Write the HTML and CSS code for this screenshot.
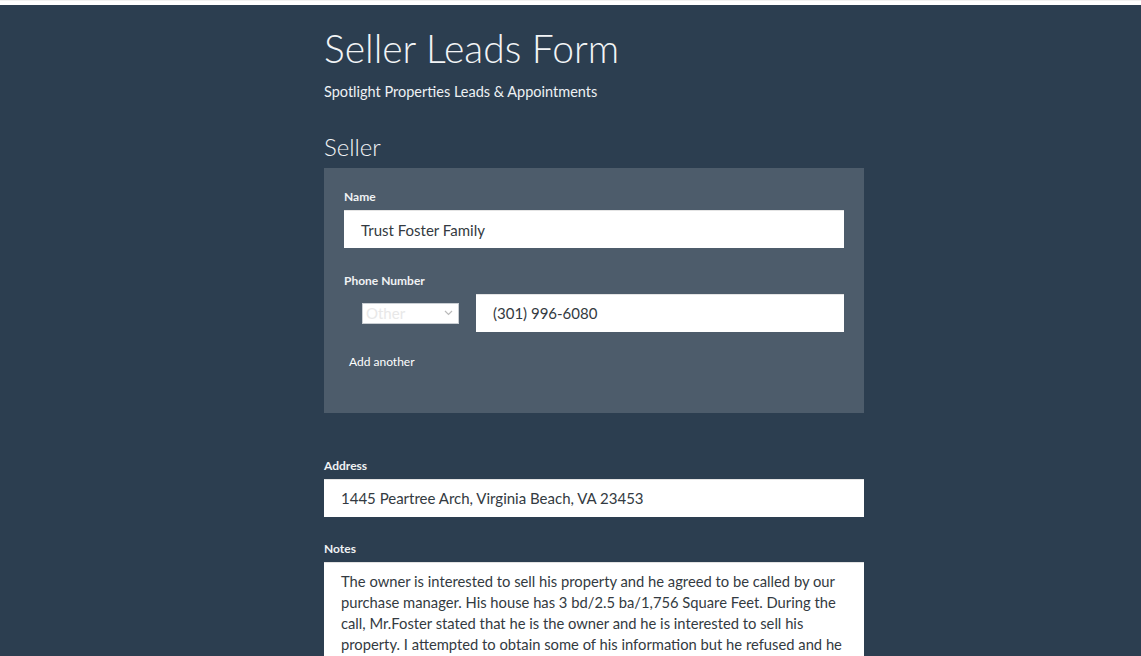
FILE: index.html
```html
<!DOCTYPE html>
<html>
<head>
<meta charset="utf-8">
<link rel="stylesheet" href="styles.css">
</head>
<body>
<div class="topbar"></div>
<main class="page">
  <h1 class="title">Seller Leads Form</h1>
  <p class="subtitle">Spotlight Properties Leads &amp; Appointments</p>
  <h2 class="section">Seller</h2>
  <section class="panel">
    <label class="label">Name</label>
    <div class="field">Trust Foster Family</div>
    <label class="label label-gap">Phone Number</label>
    <div class="phone-row">
      <div class="select"><span>Other</span>
        <svg class="chev" width="9" height="6" viewBox="0 0 9 6"><path d="M1 1l3.5 3.5L8 1" fill="none" stroke="#bbb" stroke-width="1.2"/></svg>
      </div>
      <div class="field phone">(301) 996-6080</div>
    </div>
    <div class="add">Add another</div>
  </section>
  <label class="label outer address-label">Address</label>
  <div class="field wide">1445 Peartree Arch, Virginia Beach, VA 23453</div>
  <label class="label outer notes-label">Notes</label>
  <div class="notes">The owner is interested to sell his property and he agreed to be called by our purchase manager. His house has 3 bd/2.5 ba/1,756 Square Feet. During the call, Mr.Foster stated that he is the owner and he is interested to sell his property. I attempted to obtain some of his information but he refused and he said that he will discuss everything with the purchase manager.</div>
</main>
</body>
</html>
```
FILE: styles.css
```css
html, body {
  margin: 0;
  padding: 0;
}
body {
  background: #2c3e50;
  font-family: Lato, "Open Sans", sans-serif;
  color: #fff;
  overflow: hidden;
  height: 656px;
}
.topbar {
  height: 5px;
  background: #fff;
  border-top: 1px solid #f0f0f0;
  box-sizing: border-box;
}
.page {
  width: 540px;
  margin-left: 324px;
  display: flex;
  flex-direction: column;
}
.title {
  margin: 19px 0 0;
  font-weight: 300;
  font-size: 39px;
  line-height: 48px;
  color: #f2f4f6;
}
.subtitle {
  margin: 10px 0 0;
  font-weight: 400;
  font-size: 14.5px;
  line-height: 20px;
  color: #eef1f4;
}
.section {
  margin: 30px 0 0;
  font-weight: 300;
  font-size: 24px;
  line-height: 30px;
  color: #f2f4f6;
}
.panel {
  margin-top: 6px;
  background: #4d5c6b;
  padding: 21px 20px 0;
  height: 245px;
  box-sizing: border-box;
  display: flex;
  flex-direction: column;
}
.label {
  display: block;
  font-weight: 700;
  font-size: 12px;
  line-height: 15px;
  color: #f0f2f4;
  margin-bottom: 6px;
}
.label-gap {
  margin-top: 25px;
}
.field {
  background: #fff;
  height: 38px;
  box-sizing: border-box;
  padding: 0 17px;
  font-size: 15px;
  line-height: 38px;
  color: #333a41;
  border-top: 1px solid #e4e4e4;
}
.phone-row {
  display: flex;
  align-items: center;
  padding-left: 18px;
  gap: 17px;
}
.select {
  width: 97px;
  height: 21px;
  box-sizing: border-box;
  background: #fff;
  border: 1px solid #c9ced3;
  display: flex;
  align-items: center;
  justify-content: space-between;
  padding: 0 5px 0 3px;
  font-size: 15px;
  color: #e8e8e8;
}
.chev {
  display: block;
}
.phone {
  flex: 1;
  line-height: 36px;
}
.wide {
  line-height: 36px;
}
.add {
  margin: 22px 0 0 5px;
  font-size: 12px;
  line-height: 15px;
  color: #fff;
}
.address-label {
  margin-top: 45px;
}
.notes-label {
  margin-top: 24px;
}
.notes {
  background: #fff;
  border-top: 1px solid #e2e2e2;
  padding: 8px 17px;
  font-size: 14.75px;
  line-height: 21px;
  color: #333a41;
}
```
